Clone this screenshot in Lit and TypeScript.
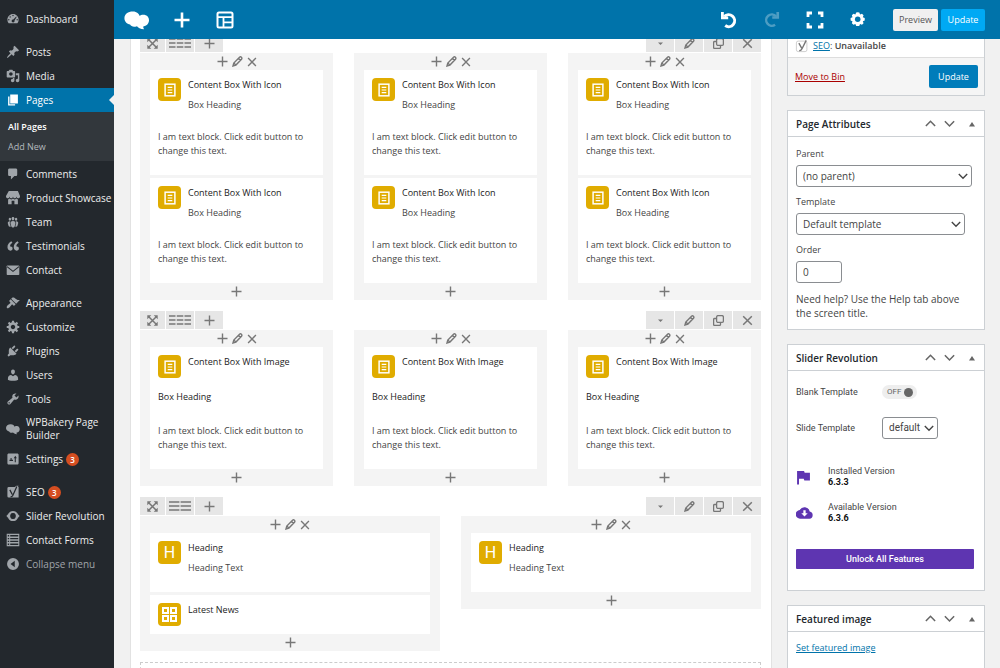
import { LitElement, html, svg, css, nothing, TemplateResult } from "lit";
import { customElement, property } from "lit/decorators.js";
import { classMap } from "lit/directives/class-map.js";

const solid = (d: string) => svg`<path fill="currentColor" fill-rule="evenodd" d=${d}></path>`;
const line = (d: string, w = 1.5) =>
  svg`<path fill="none" stroke="currentColor" stroke-width=${w} d=${d}></path>`;

const cloudLogo = "M8 1.5C12 1.5 14 4 14.6 5.6C15.6 4.4 20 3.6 22.4 6.4C25 10 22.6 15 18.6 15.4C17.6 15.6 17.8 16.6 18.8 18.4C15 18.4 13 16.4 12 15.4C8.4 16.6 6.6 15.6 5.4 13.8C2.4 13.4 0 11 0 7.8C0 4 3.4 1.5 8 1.5Z";

/* Every glyph is stored with its own viewBox. */
const ICONS: Record<string, [string, TemplateResult]> = {
  dashboard: ["0 0 20 20", solid("M3.76 16h12.48c1.1-1.37 1.76-3.11 1.76-5 0-4.42-3.58-8-8-8s-8 3.58-8 8c0 1.89.66 3.63 1.76 5zM10 4c.55 0 1 .45 1 1s-.45 1-1 1-1-.45-1-1 .45-1 1-1zM6 6c.55 0 1 .45 1 1s-.45 1-1 1-1-.45-1-1 .45-1 1-1zM14.6 6.6l.6.5-3 5.2c.5 1.3-.5 2.7-2.1 2.7-1.2 0-2.1-1-2.1-2.1 0-1.3 1.1-2.2 2.5-2.1zM4 10c.55 0 1 .45 1 1s-.45 1-1 1-1-.45-1-1 .45-1 1-1zM16 10c.55 0 1 .45 1 1s-.45 1-1 1-1-.45-1-1 .45-1 1-1z")],
  pin: ["0 0 20 20", solid("M10.44 3.02l1.82-1.82 6.36 6.35-1.83 1.82c-1.05-.68-2.48-.57-3.41.36l-.75.75c-.92.93-1.04 2.35-.35 3.41l-1.83 1.82-2.41-2.41-2.8 2.79c-.42.42-3.38 2.71-3.8 2.29s1.86-3.39 2.28-3.81l2.79-2.79L4.1 9.36l1.83-1.82c1.05.69 2.48.57 3.4-.36l.75-.75c.93-.92 1.05-2.35.36-3.41z")],
  media: ["0 0 20 20", solid("M13 11V4c0-.55-.45-1-1-1h-1.67L9 1H5L3.67 3H2c-.55 0-1 .45-1 1v7c0 .55.45 1 1 1h10c.55 0 1-.45 1-1zM7 4.5c1.38 0 2.5 1.12 2.5 2.5S8.38 9.5 7 9.5 4.5 8.38 4.5 7 5.62 4.5 7 4.5zM14 6h5v10.5c0 1.38-1.12 2.5-2.5 2.5S14 17.88 14 16.5s1.12-2.5 2.5-2.5c.17 0 .34.02.5.05V9h-3V6zm-4 8.05V13h2v3.5c0 1.38-1.12 2.5-2.5 2.5S7 17.88 7 16.5 8.12 14 9.5 14c.17 0 .34.02.5.05z")],
  page: ["0 0 20 20", solid("M6 15V2h11v13H6zm-1 1h8v2H3V5h2v11z")],
  comment: ["0 0 20 20", solid("M5 2h9c1.1 0 2 .9 2 2v7c0 1.1-.9 2-2 2h-2l-5 5v-5H5c-1.1 0-2-.9-2-2V4c0-1.1.9-2 2-2z")],
  store: ["0 0 20 20", solid("M1 10c.41.29.96.43 1.5.43.55 0 1.09-.14 1.5-.43.62-.46 1-1.17 1-2 0 .83.37 1.54 1 2 .41.29.96.43 1.5.43.55 0 1.09-.14 1.5-.43.62-.46 1-1.17 1-2 0 .83.37 1.54 1 2 .41.29.96.43 1.51.43.54 0 1.08-.14 1.49-.43.62-.46 1-1.17 1-2 0 .83.37 1.54 1 2 .41.29.96.43 1.5.43.55 0 1.09-.14 1.5-.43.63-.46 1-1.17 1-2V7l-3-7H4L0 7v1c0 .83.37 1.54 1 2zm2 8.99h5v-5h4v5h5v-7c-.37-.05-.72-.22-1-.43-.63-.45-1-.73-1-1.56 0 .83-.38 1.11-1 1.56-.41.3-.95.43-1.49.44-.55 0-1.1-.14-1.51-.44-.63-.45-1-.73-1-1.56 0 .83-.38 1.11-1 1.56-.41.3-.95.43-1.5.44-.54 0-1.09-.14-1.5-.44-.63-.45-1-.73-1-1.57 0 .84-.38 1.12-1 1.57-.29.21-.63.38-1 .44v6.99z")],
  groups: ["0 0 20 20", solid("M8.03 4.46c-.29 1.28.55 3.46 1.97 3.46 1.41 0 2.25-2.18 1.96-3.46-.22-.98-1.08-1.63-1.96-1.63-.89 0-1.74.65-1.97 1.63zm-4.13.9c-.25 1.08.47 2.93 1.67 2.93s1.92-1.85 1.67-2.93c-.19-.83-.92-1.39-1.67-1.39s-1.48.56-1.67 1.39zm8.86 0c-.25 1.08.47 2.93 1.66 2.93 1.2 0 1.92-1.85 1.67-2.93-.19-.83-.92-1.39-1.67-1.39-.74 0-1.47.56-1.66 1.39zm-.59 11.43l1.25-4.3C14.2 10 12.71 8.47 10 8.47c-2.72 0-4.21 1.53-3.44 4.02l1.26 4.3C8.05 17.51 9 18 10 18c.98 0 1.94-.49 2.17-1.21zm-6.1-7.63c-.49.67-.96 1.83-.42 3.59l1.12 3.79c-.34.2-.77.31-1.2.31-.85 0-1.65-.41-1.85-1.03l-1.07-3.65c-.65-2.11.61-3.4 2.92-3.4.27 0 .54.02.79.06-.1.1-.2.22-.29.33zm8.35-.39c2.31 0 3.58 1.29 2.92 3.4l-1.07 3.65c-.2.62-1 1.03-1.85 1.03-.43 0-.86-.11-1.2-.31l1.11-3.77c.55-1.78.08-2.94-.42-3.61-.08-.11-.18-.23-.28-.33.25-.04.51-.06.79-.06z")],
  quote: ["1 1 18 18", solid("M9.49 13.22c0-.74-.2-1.38-.61-1.9-.62-.78-1.83-.88-2.53-.72-.29-1.65 1.11-3.75 2.92-4.65L7.88 4c-2.73 1.3-5.42 4.28-4.96 8.05C3.21 14.43 4.59 16 6.54 16c.85 0 1.56-.25 2.12-.75s.83-1.18.83-2.03zm8.05 0c0-.74-.2-1.38-.61-1.9-.63-.78-1.83-.88-2.53-.72-.29-1.65 1.11-3.75 2.92-4.65L15.93 4c-2.73 1.3-5.41 4.28-4.95 8.05.29 2.38 1.66 3.95 3.61 3.95.85 0 1.56-.25 2.12-.75s.83-1.18.83-2.03z")],
  mail: ["0 0 20 20", svg`<rect x="1" y="3.5" width="18" height="13.500" rx="1" fill="currentColor"></rect><path d="M1.500 5.200L10 12l8.500-6.800" fill="none" stroke="#23282d" stroke-width="1.500"></path>`],
  brush: ["0 0 20 20", solid("M14.48 11.06L7.41 3.99l1.5-1.5c.5-.56 2.3-.47 3.51.32 1.21.8 1.43 1.28 2.91 2.1 1.18.64 2.45 1.26 4.45.85zm-.71.71L6.7 4.7 4.93 6.47c-.39.39-.39 1.02 0 1.41l1.06 1.06c.39.39.39 1.03 0 1.42-.6.6-1.43 1.11-2.21 1.69-.35.26-.7.53-1.01.84C1.43 14.23.4 16.08 1.4 17.07c.99 1 2.84-.03 4.18-1.36.31-.31.58-.66.85-1.02.57-.78 1.08-1.61 1.69-2.21.39-.39 1.02-.39 1.41 0l1.06 1.06c.39.39 1.02.39 1.41 0z")],
  gear: ["0 1 19 19", solid("M18 12h-2.18c-.17.7-.44 1.35-.81 1.93l1.54 1.54-2.1 2.1-1.54-1.54c-.58.36-1.23.63-1.91.79V19H8v-2.18c-.68-.16-1.33-.43-1.91-.79l-1.54 1.54-2.12-2.12 1.54-1.54c-.36-.58-.63-1.23-.79-1.91H1V9.03h2.17c.16-.7.44-1.35.8-1.94L2.43 5.55l2.1-2.1 1.54 1.54c.58-.37 1.24-.64 1.93-.81V2h3v2.18c.68.16 1.33.43 1.91.79l1.54-1.54 2.12 2.12-1.54 1.54c.36.59.64 1.24.8 1.94H18V12zm-8.5 1.5c1.66 0 3-1.34 3-3s-1.34-3-3-3-3 1.34-3 3 1.34 3 3 3z")],
  plug: ["0 0 20 20", solid("M13.11 4.36L9.87 7.6 8 5.73l3.24-3.24c.35-.34 1.05-.2 1.56.32.52.51.66 1.21.31 1.55zm-8 1.77l.91-1.12 9.01 9.01-1.19.84c-.71.71-2.63 1.16-3.82 1.16H6.14L4.9 17.26c-.59.59-1.54.59-2.12 0-.59-.58-.59-1.53 0-2.12l1.24-1.24v-3.88c0-1.13.4-3.19 1.09-3.89zm7.26 3.97l3.24-3.24c.34-.35 1.04-.21 1.55.31.52.51.66 1.21.31 1.55l-3.24 3.25z")],
  user: ["0 0 20 20", solid("M10 9.25c-2.27 0-2.73-3.44-2.73-3.44C7 4.02 7.82 2 9.97 2c2.16 0 2.98 2.02 2.71 3.81 0 0-.41 3.44-2.68 3.44zm0 2.57L12.72 10c2.39 0 4.52 2.33 4.52 4.53v2.49s-3.65 1.13-7.24 1.13c-3.65 0-7.24-1.13-7.24-1.13v-2.49c0-2.25 1.94-4.48 4.47-4.48z")],
  wrench: ["0 0 20 20", solid("M16.68 9.77c-1.34 1.34-3.3 1.67-4.95.99l-5.41 6.52c-.99.99-2.59.99-3.58 0s-.99-2.59 0-3.57l6.52-5.42c-.68-1.65-.35-3.61.99-4.95 1.28-1.28 3.12-1.62 4.72-1.06l-2.89 2.89 2.82 2.82 2.86-2.87c.53 1.58.18 3.39-1.08 4.65zM3.81 16.21c.4.39 1.04.39 1.43 0 .4-.4.4-1.04 0-1.43-.39-.4-1.03-.4-1.43 0-.39.39-.39 1.03 0 1.43z")],
  bakery: ["0 -1 24 21", solid(cloudLogo)],
  sliders: ["0 0 20 20", solid("M18 16V4c0-1.1-.9-2-2-2H4c-1.1 0-2 .9-2 2v12c0 1.1.9 2 2 2h12c1.1 0 2-.9 2-2zM8 11h2v2H5v-2h1.5V8.5h1.5zM12.500 14.500V9H11l2.300-3.500L15.500 9H14v5.500z")],
  yoast: ["0 0 20 20", svg`<path fill="currentColor" d="M4 3h8.500L15 1h3l-1 2h1v15H7H4a2 2 0 0 1-2-2V5a2 2 0 0 1 2-2z"></path><path d="M5.500 7L9 13.500M15.500 2L9.500 15.500Q8.800 17 6.500 17" fill="none" stroke="#23282d" stroke-width="1.800"></path>`],
  yoastLine: ["0 0 20 20", svg`<rect x="2" y="3" width="15" height="15" rx="2.500" fill="#fff" stroke="#bbb"></rect><path d="M5.500 6L9.500 13M16 2L10 14Q8.500 17 6 16.500" fill="none" stroke="#777" stroke-width="2"></path>`],
  revolve: ["0 0 20 20", svg`<path d="M4.600 7.600A6 6 0 0 1 15.400 7.600M4.600 12.400A6 6 0 0 0 15.400 12.400" fill="none" stroke="currentColor" stroke-width="3"></path><path d="M.5 10L3.500 6.800H7V13.200H3.500zM19.500 10L16.500 6.800H13V13.200h3.500z" fill="currentColor"></path><circle cx="10" cy="10" r="4" fill="#23282d"></circle>`],
  form: ["0 0 20 20", solid("M1 1h18v18H1zM2.500 3v2h2V3zM6 3v2h11.500V3zM2.500 7v2h2V7zM6 7v2h11.500V7zM2.500 11v2h2v-2zM6 11v2h11.500v-2zM2.500 15v2h2v-2zM6 15v2h11.500v-2z")],
  collapse: ["0 0 20 20", solid("M10 1.500a8.500 8.500 0 1 0 0 17 8.500 8.500 0 0 0 0-17zM12.500 5.500v9L6.500 10z")],

  plusBold: ["0 0 16 16", line("M8 .5v15M.5 8h15", 2.6)],
  layout: ["0 0 18 18", svg`<rect x="1.500" y="1.500" width="15" height="15" rx="1.500" fill="none" stroke="currentColor" stroke-width="2"></rect><path d="M1.500 6.200h15M7.500 6.200v10M7.500 11.400h9" stroke="currentColor" stroke-width="1.800" fill="none"></path>`],
  undo: ["0 0 18 18", svg`<path d="M4.200 5.600A6 6 0 1 1 5.200 14.600" fill="none" stroke="currentColor" stroke-width="3"></path><path d="M1 1V8.200H8.200V5.600H3.800V1z" fill="currentColor"></path>`],
  redo: ["0 0 18 18", svg`<path d="M13.800 5.600A6 6 0 1 0 12.800 14.600" fill="none" stroke="currentColor" stroke-width="2.600"></path><path d="M17 1V8.200H9.800V5.600h4.400V1z" fill="currentColor"></path>`],
  screen: ["0 0 18 18", line("M2 6V2h4M12 2h4v4M16 12v4h-4M6 16H2v-4", 2.8)],
  cog: ["0 0 16 16", svg`<path d="M8 1.2l1.700.2.7 1.800 1.800-.6 1.500 1.500-.7 1.800 1.800.8v2.200l-1.800.8.7 1.800-1.500 1.500-1.800-.7-.8 1.800H6.800L6 12.300l-1.800.7-1.500-1.500.6-1.800-1.800-.8V6.700l1.800-.8-.6-1.800 1.500-1.500 1.800.6.8-1.800z" fill="currentColor"></path><circle cx="8.200" cy="7.800" r="2.600" fill="#0073aa"></circle>`],

  move: ["0 0 11 11", svg`<path d="M1.500 1.500l8 8M9.500 1.500l-8 8" stroke="currentColor" stroke-width="1.500"></path><path d="M.3.3h4L.3 4.300zM10.700.3v4L6.700.3zM.3 10.700v-4l4 4zM10.700 10.700h-4l4-4z" fill="currentColor"></path>`],
  cols3: ["0 0 22 10", line("M0 1h6.500M7.800 1h6.500M15.500 1H22M0 5h6.500M7.800 5h6.500M15.500 5H22M0 9h6.500M7.800 9h6.500M15.500 9H22", 1.3)],
  cols2: ["0 0 22 10", line("M0 1h10.400M11.600 1H22M0 5h10.400M11.600 5H22M0 9h10.400M11.600 9H22", 1.3)],
  plus: ["0 0 11 11", line("M5.500.5v10M.5 5.500h10", 1.4)],
  pencil: ["0 0 11 11", svg`<path d="M1 10l.8-3L7.500 1.200q1-.8 1.900.1t.1 1.900L3.900 9.100zM6.400 2.300l2 2M1.800 7l2 2.100" fill="none" stroke="currentColor" stroke-width="1.400"></path>`],
  cross: ["0 0 11 11", line("M1.2 1.2l8.6 8.6M9.8 1.2L1.2 9.8", 1.5)],
  copy: ["0 0 11 11", svg`<rect x="3.600" y=".6" width="6.800" height="6.800" rx="1.500" fill="none" stroke="currentColor" stroke-width="1.300"></rect><path d="M3.500 3.500H1.600a1 1 0 0 0-1 1v4.900a1 1 0 0 0 1 1h4.900a1 1 0 0 0 1-1V7.500" fill="none" stroke="currentColor" stroke-width="1.300"></path>`],
  caret: ["0 0 11 11", solid("M3 4.500h5L5.500 7z")],

  up: ["0 0 10 10", line("M.8 7.200L5 3l4.200 4.200", 1.4)],
  down: ["0 0 10 10", line("M.8 3L5 7.200 9.200 3", 1.4)],
  tri: ["0 0 10 10", solid("M2 7.500h6L5 3z")],
  flag: ["0 0 14 14", solid("M1 1h6.500l.6 1.600H13v7.200H7.800L7.200 8.200H2.800V13.500H1z")],
  cloud: ["0 0 18 14", solid("M14.500 5.300A5.600 5.600 0 0 0 4 3.900 4.400 4.400 0 0 0 4.500 13h9.700a3.900 3.900 0 0 0 .3-7.700zM7.800 4h2.400v3.300h2.200L9 10.800 5.600 7.300h2.200z")],
  text: ["0 0 13 15", svg`<rect x="1.200" y="1.200" width="10.600" height="12.600" fill="none" stroke="currentColor" stroke-width="1.600"></rect><path d="M4 4.600h5M4 7.500h5M4 10.400h5" stroke="currentColor" stroke-width="1.300"></path>`],
  grid: ["0 0 15 15", solid("M0 0h7v7H0zM2 2v3h3V2zM8 0h7v7H8zM10 2v3h3V2zM0 8h7v7H0zM2 10v3h3v-3zM8 8h7v7H8zM10 10v3h3v-3z")],
};

const icon = (name: string, w: number, h = w) =>
  html`<svg class="icon" aria-hidden="true" width=${w} height=${h} viewBox=${ICONS[name][0]}>${ICONS[name][1]}</svg>`;

const base = css`
  * { box-sizing: border-box; }
  .icon { display: block; flex: none; }
  button {
    font: inherit; color: inherit; background: none; border: 0; margin: 0; padding: 0;
    display: flex; align-items: center; justify-content: center; cursor: pointer;
  }
  p, h2, h3 { margin: 0; font-size: inherit; font-weight: inherit; }
`;

interface Item { icon: string; label: string; badge?: number; current?: boolean }

const MENU: Item[][] = [
  [{ icon: "dashboard", label: "Dashboard" }],
  [
    { icon: "pin", label: "Posts" },
    { icon: "media", label: "Media" },
    { icon: "page", label: "Pages", current: true },
    { icon: "comment", label: "Comments" },
    { icon: "store", label: "Product Showcase" },
    { icon: "groups", label: "Team" },
    { icon: "quote", label: "Testimonials" },
    { icon: "mail", label: "Contact" },
  ],
  [
    { icon: "brush", label: "Appearance" },
    { icon: "gear", label: "Customize" },
    { icon: "plug", label: "Plugins" },
    { icon: "user", label: "Users" },
    { icon: "wrench", label: "Tools" },
    { icon: "bakery", label: "WPBakery Page Builder" },
    { icon: "sliders", label: "Settings", badge: 3 },
  ],
  [
    { icon: "yoast", label: "SEO", badge: 3 },
    { icon: "revolve", label: "Slider Revolution" },
    { icon: "form", label: "Contact Forms" },
  ],
];

@customElement("admin-menu")
export class AdminMenu extends LitElement {
  static styles = [base, css`
    :host { display: block; background: #23282d; color: #eee; padding-top: 7px; overflow: hidden; }
    ul { list-style: none; margin: 0 0 9px; padding: 0; }
    ul.last { margin-bottom: 0; }
    .link {
      display: flex; align-items: center; gap: 6px; min-height: 24px; width: 100%;
      padding: 5px 0 5px 6px; line-height: 13px; color: inherit; text-decoration: none; text-align: left;
    }
    .link .icon { color: #a0a5aa; }
    .label { display: flex; align-items: center; gap: 3px; }
    .current { position: relative; background: #0073aa; color: #fff; }
    .current .icon { color: #fff; }
    .current::after {
      content: ""; position: absolute; right: 0; top: 7px;
      border: 5px solid transparent; border-right-color: #f1f1f1; border-left: 0;
    }
    .submenu { background: #32373c; padding: 5px 0 4px 8px; margin: 0 0 1px; }
    .submenu a { display: block; font-size: 9px; line-height: 20px; color: #b4b9be; text-decoration: none; }
    .submenu a.active { color: #fff; font-weight: 600; }
    .badge {
      width: 13px; height: 13px; border-radius: 7px; background: #d54e21; color: #fff;
      font-size: 8px; line-height: 13px; text-align: center; font-weight: 600;
    }
    .collapse { justify-content: flex-start; color: #a0a5aa; }
  `];

  private item(i: Item) {
    return html`<li>
      <a href="#" class=${classMap({ link: true, current: !!i.current })}>
        ${icon(i.icon, 14)}
        <span class="label">${i.label}${i.badge ? html`<span class="badge">${i.badge}</span>` : nothing}</span>
      </a>
      ${i.current ? html`<div class="submenu"><a href="#" class="active">All Pages</a><a href="#">Add New</a></div>` : nothing}
    </li>`;
  }

  render() {
    return html`<nav aria-label="Main menu">
      ${MENU.map((g, n) => html`<ul class=${classMap({ last: n === MENU.length - 1 })}>${g.map((i) => this.item(i))}</ul>`)}
      <button class="link collapse">${icon("collapse", 14)}<span>Collapse menu</span></button>
    </nav>`;
  }
}

@customElement("builder-bar")
export class BuilderBar extends LitElement {
  static styles = [base, css`
    :host { display: flex; align-items: stretch; height: 39px; background: #0073aa; color: #fff; padding-right: 15px; font-size: 9px; }
    .tool { width: 43px; }
    .logo { width: 46px; }
    .off { opacity: .3; }
    .space { flex: 1; }
    .actions { display: flex; align-items: center; gap: 3px; margin-left: 14px; }
    .action { height: 22px; width: 45px; border-radius: 2px; background: #f0f0f0; color: #555; }
    .primary { width: 44px; background: #00a9f4; color: #fff; }
  `];
  render() {
    return html`
      <button class="logo" aria-label="WPBakery">${icon("bakery", 26, 22)}</button>
      <button class="tool" aria-label="Add element">${icon("plusBold", 16)}</button>
      <button class="tool" aria-label="Templates">${icon("layout", 18)}</button>
      <span class="space"></span>
      <button class="tool" aria-label="Undo">${icon("undo", 18)}</button>
      <button class="tool off" aria-label="Redo">${icon("redo", 17)}</button>
      <button class="tool" aria-label="Full screen">${icon("screen", 18)}</button>
      <button class="tool" aria-label="Settings">${icon("cog", 17)}</button>
      <div class="actions">
        <button class="action">Preview</button>
        <button class="action primary">Update</button>
      </div>`;
  }
}

interface Block { glyph: string; title: string; sub?: string; heading?: string; text?: boolean }

const withIcon: Block = { glyph: "text", title: "Content Box With Icon", sub: "Box Heading", text: true };
const withImage: Block = { glyph: "text", title: "Content Box With Image", heading: "Box Heading", text: true };
const heading: Block = { glyph: "H", title: "Heading", sub: "Heading Text" };
const news: Block = { glyph: "grid", title: "Latest News" };

const ROWS: Block[][][] = [
  [[withIcon, withIcon], [withIcon, withIcon], [withIcon, withIcon]],
  [[withImage], [withImage], [withImage]],
  [[heading, news], [heading]],
];

@customElement("page-builder")
export class PageBuilder extends LitElement {
  static styles = [base, css`
    :host {
      display: flex; flex-direction: column; gap: 11px; background: #fff; color: #555; font-size: 9px;
      border: 1px solid #e2e2e2; border-width: 0 1px; padding: 0 10px 0 9px; margin-top: -5px;
    }
    .bar { display: flex; gap: 1px; height: 18px; margin-bottom: 1px; color: #777; }
    .bar button { width: 28px; background: #e6e6e6; }
    .bar .move { width: 25px; }
    .space { flex: 1; }
    .cols { display: flex; gap: 21px; align-items: flex-start; }
    .col { flex: 1; min-width: 0; background: #f4f4f4; padding: 0 10px; color: #777; }
    .controls { display: flex; justify-content: center; align-items: center; gap: 4px; height: 17px; }
    .blocks { display: flex; flex-direction: column; gap: 3px; }
    .block { background: #fff; padding: 8px 8px 17px; color: #444; }
    .bare { padding-bottom: 8px; }
    .head { display: flex; gap: 7px; }
    .tile {
      width: 23px; height: 23px; flex: none; border-radius: 4px; background: #e0ac00; color: #fff;
      display: flex; align-items: center; justify-content: center;
    }
    .letter { font: 400 16px/23px Roboto, sans-serif; }
    .title { line-height: 13px; color: #222; font-weight: 500; }
    .sub { margin-top: 7px; line-height: 14px; }
    .heading { margin-top: 12px; line-height: 14px; color: #222; font-weight: 500; }
    .text { margin-top: 18px; line-height: 14px; }
    .heading + .text { margin-top: 20px; }
    .drop { height: 60px; border: 1px dashed #ccc; }
  `];

  private block(b: Block) {
    return html`<article class=${classMap({ block: true, bare: !b.sub && !b.text })}>
      <div class="head">
        <span class="tile">${b.glyph === "H" ? html`<span class="letter">H</span>` : b.glyph === "grid" ? icon("grid", 15) : icon("text", 12, 14)}</span>
        <div>
          <h3 class="title">${b.title}</h3>
          ${b.sub ? html`<p class="sub">${b.sub}</p>` : nothing}
        </div>
      </div>
      ${b.heading ? html`<p class="heading">${b.heading}</p>` : nothing}
      ${b.text ? html`<p class="text">I am text block. Click edit button to change this text.</p>` : nothing}
    </article>`;
  }

  render() {
    return html`
      ${ROWS.map((cols) => html`<section>
        <div class="bar">
          <button class="move" aria-label="Move row">${icon("move", 11)}</button>
          <button aria-label="Row layout">${icon(cols.length === 3 ? "cols3" : "cols2", 22, 10)}</button>
          <button aria-label="Add to row">${icon("plus", 11)}</button>
          <span class="space"></span>
          <button aria-label="Toggle row">${icon("caret", 11)}</button>
          <button aria-label="Edit row">${icon("pencil", 11)}</button>
          <button aria-label="Clone row">${icon("copy", 11)}</button>
          <button aria-label="Delete row">${icon("cross", 11)}</button>
        </div>
        <div class="cols">
          ${cols.map((blocks) => html`<div class="col">
            <div class="controls">
              <button aria-label="Prepend">${icon("plus", 11)}</button>
              <button aria-label="Edit column">${icon("pencil", 11)}</button>
              <button aria-label="Delete column">${icon("cross", 10)}</button>
            </div>
            <div class="blocks">${blocks.map((b) => this.block(b))}</div>
            <div class="controls"><button aria-label="Append">${icon("plus", 11)}</button></div>
          </div>`)}
        </div>
      </section>`)}
      <div class="drop"></div>`;
  }
}

@customElement("meta-box")
export class MetaBox extends LitElement {
  @property() heading = "";
  static styles = [base, css`
    :host { display: block; background: #fff; border: 1px solid #ccd0d4; }
    header { display: flex; align-items: center; height: 26px; padding: 0 7px 0 8px; border-bottom: 1px solid #ccd0d4; color: #666; font-size: 10px; }
    h2 { flex: 1; font-weight: 600; color: #23282d; }
    .order { display: flex; gap: 8px; margin-right: 12px; }
  `];
  render() {
    return html`<header>
        <h2>${this.heading}</h2>
        <div class="order">
          <button aria-label="Move up">${icon("up", 11)}</button>
          <button aria-label="Move down">${icon("down", 11)}</button>
        </div>
        <button aria-label="Toggle panel">${icon("tri", 10)}</button>
      </header><slot></slot>`;
  }
}

@customElement("settings-column")
export class SettingsColumn extends LitElement {
  static styles = [base, css`
    :host { display: flex; flex-direction: column; gap: 14px; color: #444; font-size: 9px; }
    a { color: #0073aa; }
    .publish { background: #fff; border: 1px solid #ccd0d4; border-top: 0; }
    .status { display: flex; align-items: center; gap: 4px; height: 18px; padding: 0 7px 4px; color: #999; }
    .status p { color: #444; }
    .status b { font-weight: 600; }
    .submit { display: flex; justify-content: space-between; align-items: center; height: 38px; padding: 0 6px 0 7px; background: #f5f5f5; border-top: 1px solid #ddd; }
    .submit a { color: #a00; }
    .save { width: 49px; height: 23px; border-radius: 2px; background: #007cba; color: #fff; }
    .attrs { display: flex; flex-direction: column; align-items: flex-start; padding: 10px 12px 9px 8px; }
    .attrs label { line-height: 14px; margin-bottom: 4px; font-weight: 500; }
    .pick { display: grid; align-items: center; margin-bottom: 8px; }
    .pick select, .pick .icon { grid-area: 1 / 1; }
    .pick .icon { justify-self: end; margin-right: 4px; pointer-events: none; color: #444; }
    select, .order {
      appearance: none; font: inherit; font-size: 10px; color: #444; background: #fff; border: 1px solid #8a8d91;
      border-radius: 3px; height: 22px; padding: 0 15px 0 6px; width: 100%; margin: 0;
    }
    .full { width: 100%; }
    .wide { width: 96%; }
    .order { width: 46px; padding-right: 2px; margin-bottom: 9px; }
    .help { font-size: 10px; line-height: 14px; }
    .slider { padding: 10px 10px 21px 8px; font-family: Roboto, sans-serif; }
    .field { display: grid; grid-template-columns: 86px auto; align-items: center; justify-content: start; height: 22px; margin-bottom: 14px; }
    .field .pick { margin: 0; width: 56px; }
    .switch { display: flex; align-items: center; gap: 3px; height: 14px; padding: 0 4px 0 5px; border-radius: 7px; background: #eee; color: #666; font-size: 8px; }
    .switch input { appearance: none; margin: 0; width: 9px; height: 9px; border-radius: 5px; background: #666; }
    .version { display: grid; grid-template-columns: 17px auto; gap: 15px; align-items: center; justify-items: start; height: 22px; line-height: 11px; margin-bottom: 14px; color: #5e35b1; }
    .version p { color: #444; }
    .version b { display: block; color: #111; font-weight: 700; }
    .first { margin-top: 27px; }
    .unlock { width: 100%; height: 20px; margin-top: 25px; background: #5e35b1; color: #fff; font-weight: 500; border-radius: 1px; }
    .image { padding: 9px 8px 40px; line-height: 14px; }
  `];
  render() {
    return html`
      <section class="publish">
        <div class="status">${icon("yoastLine", 14)}<p><a href="#">SEO</a>: <b>Unavailable</b></p></div>
        <div class="submit"><a href="#">Move to Bin</a><button class="save">Update</button></div>
      </section>
      <meta-box heading="Page Attributes">
        <div class="attrs">
          <label for="parent">Parent</label>
          <span class="pick full"><select id="parent"><option>(no parent)</option></select>${icon("down", 10)}</span>
          <label for="template">Template</label>
          <span class="pick wide"><select id="template"><option>Default template</option></select>${icon("down", 10)}</span>
          <label for="order">Order</label>
          <input class="order" id="order" type="text" value="0" />
          <p class="help">Need help? Use the Help tab above the screen title.</p>
        </div>
      </meta-box>
      <meta-box heading="Slider Revolution">
        <div class="slider">
          <div class="field"><label for="blank">Blank Template</label><label class="switch">OFF<input id="blank" type="checkbox" /></label></div>
          <div class="field"><label for="slide">Slide Template</label>
            <span class="pick"><select id="slide"><option>default</option></select>${icon("down", 10)}</span></div>
          <div class="version first">${icon("flag", 15)}<p>Installed Version<b>6.3.3</b></p></div>
          <div class="version">${icon("cloud", 17, 14)}<p>Available Version<b>6.3.6</b></p></div>
          <button class="unlock">Unlock All Features</button>
        </div>
      </meta-box>
      <meta-box heading="Featured image">
        <p class="image"><a href="#">Set featured image</a></p>
      </meta-box>`;
  }
}

@customElement("app-root")
export class AppRoot extends LitElement {
  static styles = [base, css`
    :host {
      display: grid; grid-template-columns: 114px minmax(0, 1fr); height: 100vh; overflow: hidden;
      background: #f1f1f1; font: 10px/14px "Open Sans", "Noto Sans", sans-serif;
    }
    .page { display: flex; flex-direction: column; min-width: 0; min-height: 0; }
    .work { flex: 1; min-height: 0; overflow: hidden; display: grid; grid-template-columns: minmax(0, 1fr) 198px; gap: 15px; padding: 0 15px 0 16px; align-items: start; }
  `];
  render() {
    return html`
      <admin-menu></admin-menu>
      <div class="page">
        <builder-bar></builder-bar>
        <main class="work">
          <page-builder></page-builder>
          <settings-column></settings-column>
        </main>
      </div>`;
  }
}
